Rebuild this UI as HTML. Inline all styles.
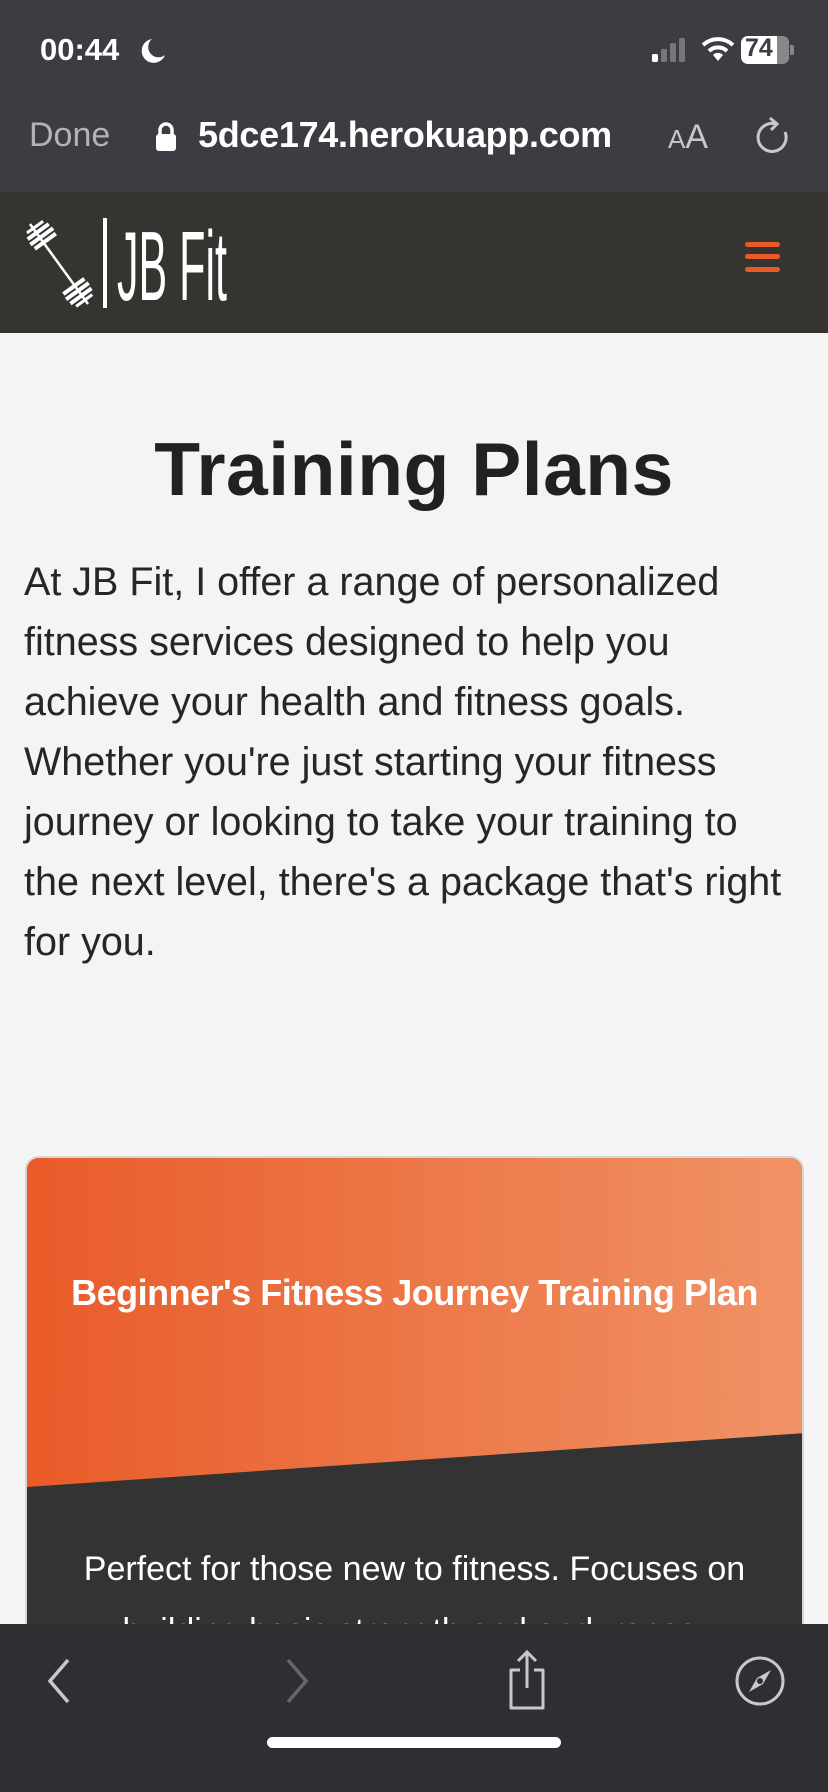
<!DOCTYPE html>
<html style="overflow:hidden;height:1792px"><head><meta charset="utf-8"><style>
*{margin:0;padding:0;box-sizing:border-box}
body{width:828px;height:1792px;overflow:hidden;background:#f4f4f4;font-family:"Liberation Sans",sans-serif;position:relative}
.status{position:absolute;left:0;top:0;width:828px;height:192px;background:#3d3c42}
.nav{position:absolute;left:0;top:192px;width:828px;height:141px;background:#353430}
.abs{position:absolute}
h1{position:absolute;left:0;width:828px;top:426px;text-align:center;font-size:75px;font-weight:bold;color:#212121;letter-spacing:0.5px}
.para{position:absolute;left:24px;top:552px;width:810px;font-size:39.5px;line-height:60px;color:#262626;white-space:nowrap}
.card{position:absolute;left:25px;top:1156px;width:779px;height:600px;border-radius:14px;border:2px solid #d6d6d6;overflow:hidden;background:#333}
.toolbar{position:absolute;left:0;top:1624px;width:828px;height:168px;background:#2f2f33}
</style></head><body>
<div class="status">
 <div class="abs" style="left:40px;top:32px;color:#fff;font-size:31px;font-weight:bold">00:44</div>
 <svg class="abs" style="left:138px;top:36px" width="30" height="30" viewBox="0 0 30 30"><path d="M14 3 A12 12 0 1 0 27 19 A10 10 0 0 1 14 3Z" fill="#fff"/></svg>
 <svg class="abs" style="left:650px;top:36px" width="40" height="28"><rect x="2" y="18" width="6" height="8" rx="1.5" fill="#fff"/><rect x="11" y="13" width="6" height="13" rx="1.5" fill="#777"/><rect x="20" y="7" width="6" height="19" rx="1.5" fill="#777"/><rect x="29" y="2" width="6" height="24" rx="1.5" fill="#777"/></svg>
 <svg class="abs" style="left:700px;top:34px" width="36" height="30" viewBox="0 0 36 30"><path d="M3 11 A22 22 0 0 1 33 11" stroke="#fff" stroke-width="4" fill="none"/><path d="M9 17 A13 13 0 0 1 27 17" stroke="#fff" stroke-width="4" fill="none"/><path d="M18 27 L13 21 A7 7 0 0 1 23 21Z" fill="#fff"/></svg>
 <div class="abs" style="left:741px;top:36px;width:48px;height:28px;border-radius:7px;background:#fff;overflow:hidden"><div style="position:absolute;right:0;top:0;width:12px;height:28px;background:#888"></div><div style="position:absolute;left:4px;top:-2px;font-size:25px;font-weight:bold;color:#3d3c42">74</div></div>
 <div class="abs" style="left:790px;top:45px;width:4px;height:10px;background:#888;border-radius:0 2px 2px 0"></div>
 <div class="abs" style="left:29px;top:116px;color:#b3b3b6;font-size:34px">Done</div>
 <svg class="abs" style="left:154px;top:122px" width="24" height="30"><path d="M6 13 V8 A6 6 0 0 1 18 8 V13" stroke="#fff" stroke-width="3.5" fill="none"/><rect x="2" y="12" width="20" height="17" rx="3" fill="#fff"/></svg>
 <div class="abs" style="left:198px;top:114px;color:#fff;font-size:36px;font-weight:bold;letter-spacing:-0.3px">5dce174.herokuapp.com</div>
 <div class="abs" style="left:668px;top:118px;color:#c8c8cc;font-size:34px"><span style="font-size:26px">A</span>A</div>
 <svg class="abs" style="left:752px;top:116px" width="40" height="42" viewBox="0 0 40 42"><path d="M24 8 A14 14 0 1 0 33 16" stroke="#c8c8cc" stroke-width="3" fill="none"/><path d="M18 2 L25 8 L19 14" stroke="#c8c8cc" stroke-width="3" fill="none"/></svg>
</div>
<div class="nav">
 <svg class="abs" style="left:20px;top:24px" width="210" height="96" viewBox="0 0 210 96">
  <line x1="10" y1="8" x2="68" y2="88" stroke="#fff" stroke-width="2.5"/>
  <g transform="translate(20 18) rotate(-36)"><rect x="-13" y="-5" width="26" height="4" fill="#fff"/><rect x="-14" y="1" width="28" height="4" fill="#fff"/><rect x="-13" y="7" width="26" height="4" fill="#fff"/><rect x="-10" y="-10" width="20" height="3" fill="#fff"/></g>
  <g transform="translate(58 76) rotate(-36)"><rect x="-13" y="-9" width="26" height="4" fill="#fff"/><rect x="-14" y="-3" width="28" height="4" fill="#fff"/><rect x="-13" y="3" width="26" height="4" fill="#fff"/><rect x="-10" y="9" width="20" height="3" fill="#fff"/></g>
  <rect x="83" y="2" width="4" height="90" fill="#fff"/>
  <text x="97" y="84" fill="#fff" font-family="Liberation Sans Narrow, Liberation Sans, sans-serif" font-size="98" textLength="110" lengthAdjust="spacingAndGlyphs">JB Fit</text>
 </svg>
 <div class="abs" style="left:745px;top:50px;width:35px;height:5px;background:#e85a24;border-radius:3px"></div>
 <div class="abs" style="left:745px;top:62px;width:35px;height:5px;background:#e85a24;border-radius:3px"></div>
 <div class="abs" style="left:745px;top:75px;width:35px;height:5px;background:#e85a24;border-radius:3px"></div>
</div>
<h1>Training Plans</h1>
<div class="para">At JB Fit, I offer a range of personalized<br>fitness services designed to help you<br>achieve your health and fitness goals.<br>Whether you're just starting your fitness<br>journey or looking to take your training to<br>the next level, there's a package that's right<br>for you.</div>
<div class="card">
 <svg class="abs" style="left:0;top:0" width="779" height="340"><defs><linearGradient id="g" x1="0" y1="0" x2="1" y2="0"><stop offset="0" stop-color="#e95b29"/><stop offset="1" stop-color="#f09366"/></linearGradient></defs><polygon points="0,0 779,0 779,275 0,329" fill="url(#g)"/></svg>
 <div class="abs" style="left:0;width:775px;top:114px;text-align:center;color:#fff;font-size:36px;font-weight:bold;letter-spacing:-0.5px">Beginner's Fitness Journey Training Plan</div>
 <div class="abs" style="left:0;width:775px;top:380px;text-align:center;color:#fff;font-size:34px;line-height:62px">Perfect for those new to fitness. Focuses on building basic strength and endurance.</div>
</div>
<div class="toolbar">
 <svg class="abs" style="left:44px;top:32px" width="30" height="50"><path d="M24 4 L6 25 L24 46" stroke="#c8c8cc" stroke-width="3.5" fill="none"/></svg>
 <svg class="abs" style="left:282px;top:32px" width="30" height="50"><path d="M6 4 L24 25 L6 46" stroke="#66666a" stroke-width="3.5" fill="none"/></svg>
 <svg class="abs" style="left:502px;top:24px" width="50" height="64"><path d="M18 22 H9 V60 H41 V22 H32" stroke="#c8c8cc" stroke-width="3" fill="none" stroke-linejoin="round"/><path d="M25 40 V4 M16 13 L25 4 L34 13" stroke="#c8c8cc" stroke-width="3" fill="none"/></svg>
 <svg class="abs" style="left:733px;top:30px" width="54" height="54"><circle cx="27" cy="27" r="23" stroke="#c8c8cc" stroke-width="3" fill="none"/><path d="M38 16 L24 24 L16 38 L30 30Z" fill="#c8c8cc"/><circle cx="27" cy="27" r="3" fill="#2f2f33"/></svg>
 <div class="abs" style="left:267px;top:113px;width:294px;height:11px;border-radius:6px;background:#fff"></div>
</div>
</body></html>
